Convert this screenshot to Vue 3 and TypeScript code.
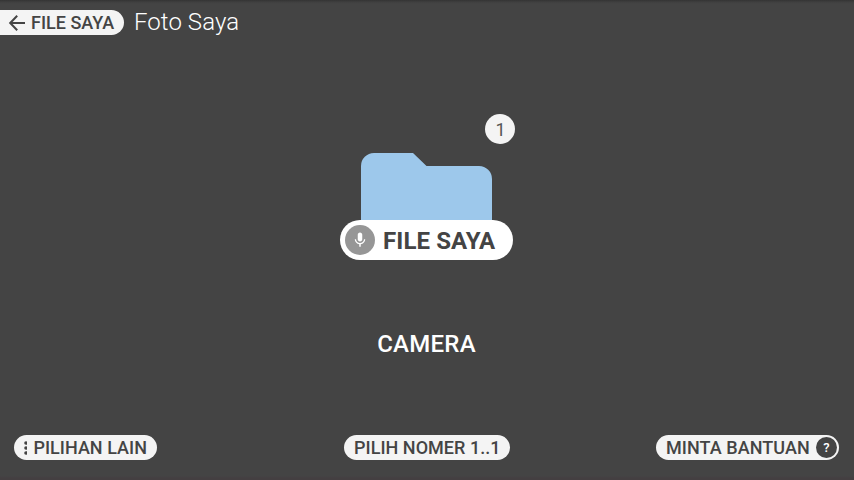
<script setup lang="ts">
interface Folder {
  index: number
  name: string
  command: string
}

const title = 'Foto Saya'
const folders: Folder[] = [{ index: 1, name: 'CAMERA', command: 'FILE SAYA' }]
</script>

<template>
  <div class="screen">
    <header class="header">
      <button class="chip back">
        <svg class="arrow" viewBox="0 0 18 18" width="18" height="18">
          <path d="M17 9H2.500M9.200 1.800L2.200 9l7 7.200" fill="none" stroke="#444" stroke-width="2" />
        </svg>
        <span>FILE SAYA</span>
      </button>
      <h1 class="title">{{ title }}</h1>
    </header>

    <main class="content">
      <section v-for="folder in folders" :key="folder.index" class="folder">
        <div class="art">
          <svg class="shape" viewBox="0 0 131 80" width="131" height="80">
            <path d="M0 80V13A13 13 0 0 1 13 0H52L65.500 13H118A13 13 0 0 1 131 26V80Z" fill="#9dc8eb" />
          </svg>
          <span class="badge">{{ folder.index }}</span>
        </div>
        <button class="command">
          <span class="mic">
            <svg viewBox="0 0 24 24" width="18" height="18">
              <path
                d="M12 14c1.660 0 3-1.340 3-3V5c0-1.660-1.340-3-3-3S9 3.340 9 5v6c0 1.660 1.340 3 3 3zM17.300 11c0 3-2.540 5.100-5.300 5.100S6.700 14 6.700 11H5c0 3.410 2.720 6.230 6 6.720V21h2v-3.280c3.280-.48 6-3.300 6-6.720h-1.700z"
                fill="#fff"
              />
            </svg>
          </span>
          <span class="command-label">{{ folder.command }}</span>
        </button>
        <h2 class="name">{{ folder.name }}</h2>
      </section>
    </main>

    <footer class="footer">
      <div class="slot">
        <button class="chip more">
          <svg class="dots" viewBox="0 0 4 14" width="4" height="14">
            <circle cx="2" cy="2" r="1.800" fill="#444" />
            <circle cx="2" cy="7" r="1.800" fill="#444" />
            <circle cx="2" cy="12" r="1.800" fill="#444" />
          </svg>
          <span>PILIHAN LAIN</span>
        </button>
      </div>
      <button class="chip select">PILIH NOMER 1..1</button>
      <div class="slot end">
        <button class="chip help">
          <span>MINTA BANTUAN</span>
          <span class="question">?</span>
        </button>
      </div>
    </footer>
  </div>
</template>

<style>
body {
  background: #444;
}
</style>

<style scoped>
.screen {
  box-sizing: border-box;
  display: flex;
  flex-direction: column;
  width: 854px;
  height: 480px;
  overflow: hidden;
  background: linear-gradient(#343434 0, #3f3f3f 2px, #444 4px, #444 476px, #443f41 478px);
  color: #fff;
  font-family: Roboto, sans-serif;
}

button {
  margin: 0;
  border: 0;
  font-family: inherit;
  white-space: nowrap;
}

.chip {
  display: flex;
  align-items: center;
  box-sizing: border-box;
  height: 25px;
  padding: 0 10px;
  border-radius: 13px;
  background: #f4f4f4;
  color: #444;
  font-size: 18px;
  font-weight: 500;
  line-height: 25px;
}

.header {
  display: flex;
  align-items: flex-start;
  gap: 10px;
  height: 50px;
  padding-top: 10px;
  box-sizing: border-box;
}

.back {
  width: 124px;
  gap: 5px;
  padding-left: 8px;
  border-radius: 0 13px 13px 0;
}

.arrow {
  flex: none;
}

.title {
  margin: -2px 0 0;
  font-size: 24px;
  font-weight: 300;
  line-height: 28px;
  letter-spacing: 0.07px;
}

.content {
  flex: 1;
  display: flex;
  justify-content: center;
  padding-top: 103px;
}

.folder {
  display: flex;
  flex-direction: column;
  align-items: center;
  width: 173px;
  margin-right: 1px;
}

.art {
  position: relative;
  height: 67px;
}

.shape {
  display: block;
}

.badge {
  position: absolute;
  top: -39.5px;
  right: -23px;
  width: 30px;
  height: 30px;
  border-radius: 50%;
  background: #f4f4f4;
  color: #555;
  font-size: 18px;
  line-height: 32px;
  text-align: center;
  text-indent: 1px;
}

.command {
  position: relative;
  display: flex;
  align-items: center;
  gap: 8px;
  box-sizing: border-box;
  width: 173px;
  height: 40px;
  padding: 0 0 0 5px;
  border-radius: 20px;
  background: #fff;
  color: #444;
  font-size: 24px;
  font-weight: 700;
  line-height: 36px;
  letter-spacing: 0.1px;
}

.command-label {
  padding-top: 2px;
}

.mic {
  display: flex;
  flex: none;
  align-items: center;
  justify-content: center;
  width: 30px;
  height: 30px;
  border-radius: 50%;
  background: #969696;
}

.name {
  margin: 69px 0 0;
  font-size: 24px;
  font-weight: 500;
  line-height: 30px;
  letter-spacing: 0.25px;
}

.footer {
  display: flex;
  justify-content: space-between;
  padding: 0 15px 20px 14px;
}

.slot {
  flex: 1;
  display: flex;
}

.end {
  justify-content: flex-end;
}

.more {
  width: 143px;
  gap: 6px;
  padding-left: 9.5px;
  letter-spacing: 0.03px;
}

.select {
  width: 166px;
  padding-left: 10.5px;
  letter-spacing: 0.03px;
}

.help {
  width: 183px;
  justify-content: space-between;
  padding-right: 2px;
  letter-spacing: 0.06px;
}

.question {
  width: 21px;
  height: 21px;
  border-radius: 50%;
  background: #444;
  color: #fff;
  font-size: 13px;
  line-height: 21px;
  text-align: center;
}
</style>
